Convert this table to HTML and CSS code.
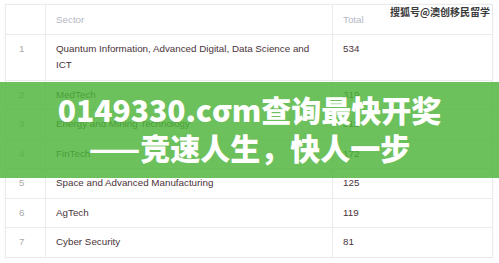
FILE: index.html
```html
<!DOCTYPE html>
<html>
<head>
<meta charset="utf-8">
<link rel="stylesheet" href="styles.css">
</head>
<body>
<div class="page">
  <table class="grid">
    <thead>
      <tr><th class="num"></th><th class="sector">Sector</th><th class="total">Total</th></tr>
    </thead>
    <tbody>
      <tr><td class="num">1</td><td>Quantum Information, Advanced Digital, Data Science and ICT</td><td>534</td></tr>
      <tr><td class="num">2</td><td>MedTech</td><td>319</td></tr>
      <tr><td class="num">3</td><td>Energy and Mining Technology</td><td>315</td></tr>
      <tr><td class="num">4</td><td>FinTech</td><td>172</td></tr>
      <tr><td class="num">5</td><td>Space and Advanced Manufacturing</td><td>125</td></tr>
      <tr><td class="num">6</td><td>AgTech</td><td>119</td></tr>
      <tr><td class="num">7</td><td>Cyber Security</td><td>81</td></tr>
    </tbody>
  </table>
  <div class="watermark">搜狐号@澳创移民留学</div>
  <div class="banner">
    <div class="line">0149330.cσm查询最快开奖</div>
    <div class="line">——竞速人生，快人一步</div>
  </div>
</div>
</body>
</html>
```

FILE: styles.css
```css
html, body {
  margin: 0;
  padding: 0;
  background: #ffffff;
}
.page {
  position: relative;
  width: 499px;
  height: 263px;
  overflow: hidden;
  padding: 4px 6px 0 5px;
  box-sizing: border-box;
}
.grid {
  width: 488px;
  border-collapse: collapse;
  font-family: "Liberation Sans", Arial, sans-serif;
  font-size: 9.8px;
  line-height: 16px;
  color: #4a3339;
  border: 1px solid #e6e6e6;
  box-shadow: 0 0 2px rgba(0,0,0,0.06);
}
.grid th, .grid td {
  border: 1px solid #ebebeb;
  padding: 6.25px 10px 6.25px 10px;
  text-align: left;
  vertical-align: top;
}
.grid th {
  font-weight: normal;
  color: #b4b8c4;
  padding-top: 6.5px;
  padding-bottom: 6.5px;
}
.grid .num {
  width: 19px;
  padding-left: 13px;
  padding-right: 7px;
  color: #a9a9a9;
}
.grid td.num { color: #aaaaaa; }
.grid .sector { width: 266px; }
.watermark {
  position: absolute;
  top: 5px;
  right: 9px;
  font-family: "Noto Sans CJK SC", sans-serif;
  font-weight: 700;
  font-size: 10px;
  line-height: 14px;
  color: #3a3a3a;
  text-shadow: 0 0 2px #fff, 0 0 1px #fff;
}
.banner {
  position: absolute;
  left: 0;
  right: 0;
  top: 82px;
  height: 96px;
  background: rgba(76, 179, 56, 0.82);
  display: flex;
  flex-direction: column;
  align-items: center;
  justify-content: center;
  gap: 1px;
  padding-bottom: 4px;
  box-sizing: border-box;
}
.banner .line {
  font-family: "Noto Sans CJK SC", "Noto Sans", sans-serif;
  font-weight: 900;
  font-size: 30px;
  line-height: 37px;
  color: #ffffff;
  white-space: nowrap;
}
```
